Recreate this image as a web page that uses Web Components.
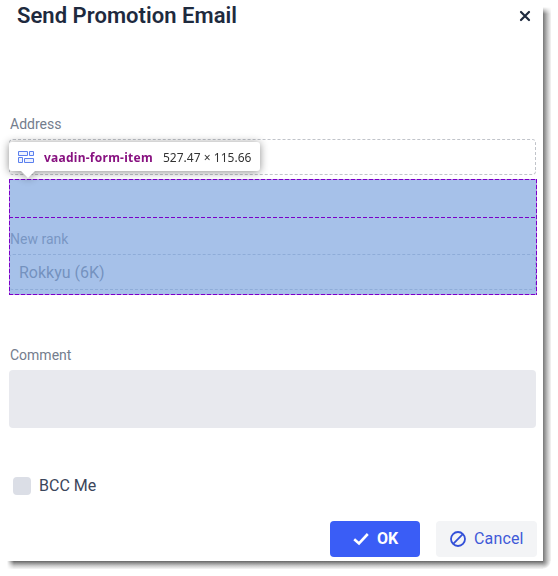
<!DOCTYPE html>
<html lang="en"><head><meta charset="utf-8"><title>Send Promotion Email</title>
<style>html,body{margin:0;background:#fff;width:558px;height:576px;overflow:hidden}</style></head>
<body>
<promo-dialog heading="Send Promotion Email">
  <form-row label="Address" style="height:63px"><dash-field></dash-field></form-row>
  <form-row label="New rank" style="height:116px"><dash-field filled>Rokkyu (6K)</dash-field>
    <inspect-overlay slot="over" tag="vaadin-form-item" dims="527.47 × 115.66"></inspect-overlay></form-row>
  <form-row label="Comment" style="height:133px"><dash-field area></dash-field></form-row>
  <check-box>BCC Me</check-box>
  <action-button slot="footer" primary>
    <svg slot="icon" width="18" height="16" viewBox="0 0 18 16"><path d="M2.2 8.2 7 12.4 15.8 3" fill="none" stroke="#fff" stroke-width="2.6"/></svg>OK</action-button>
  <action-button slot="footer">
    <svg slot="icon" width="16" height="16" viewBox="0 0 16 16"><g fill="none" stroke="#3350d8" stroke-width="1.8"><circle cx="8" cy="8" r="7"/><path d="M3.2 12.8 12.8 3.2"/></g></svg>Cancel</action-button>
</promo-dialog>
<script>
const define = (name, html) => {
  const t = document.createElement('template');
  t.innerHTML = html;
  customElements.define(name, class extends HTMLElement {
    constructor() {
      super();
      this.attachShadow({mode: 'open'}).append(t.content.cloneNode(true));
    }
    connectedCallback() {
      this.shadowRoot.querySelectorAll('[data-attr]').forEach(e => {
        e.textContent = this.getAttribute(e.dataset.attr) || '';
      });
    }
  });
};
define('form-row', `<style>
:host{display:flex;flex-direction:column;position:relative;box-sizing:border-box}
.label{height:18px;line-height:18px;font-size:14px;color:#747d8d;padding-left:1px;margin-bottom:6px}
.body{display:flex;flex-direction:column}
:host([label="New rank"]){padding-top:51px}
:host([label="New rank"]) .label{color:#4a5468}
:host([label="Comment"]){padding-top:51px}
</style><div class="label" data-attr="label"></div><div class="body"><slot></slot></div><slot name="over"></slot>`);
define('dash-field', `<style>
:host{display:block;box-sizing:border-box;width:527px;height:36px;border:1px dashed #c1c4ca;border-radius:4px;padding-left:9px;font-size:16px;line-height:36px;color:#384356}
:host([filled]){border-color:#a0aabb}
:host([area]){height:58px;border:0;background:#e8e9ee}
</style><slot></slot>`);
define('check-box', `<style>
:host{display:flex;align-items:center;height:18px;margin:49px 0 0 4px;gap:8px;font-size:16px;line-height:18px;color:#3b465b}
i{width:18px;height:18px;border-radius:4px;background:#dbdee6}
</style><i></i><span><slot></slot></span>`);
define('action-button', `<style>
:host{display:flex;box-sizing:border-box;width:101px;height:36px;border-radius:4px;align-items:center;justify-content:flex-start;padding-left:14px;gap:8px;background:#f3f4f6;color:#3f59d8;font-size:16px;font-weight:400;letter-spacing:.15px}
:host([primary]){width:90px;background:#3a5df6;color:#fff;font-weight:700;padding-left:22px;gap:7px;letter-spacing:0}
::slotted(svg){display:block}
span{padding-bottom:2px}
</style><slot name="icon"></slot><span><slot></slot></span>`);
define('inspect-overlay', `<style>
:host{display:block;position:absolute;left:0;top:0;width:528px;height:116px;box-sizing:border-box}
.fill{position:absolute;inset:0;background:rgba(136,172,226,.75)}
svg.lines{position:absolute;inset:0}
.tip{position:absolute;left:0;top:-37px;width:251px;height:29px;box-sizing:border-box;background:#fff;border-radius:3px;display:flex;align-items:center;padding:1px 0 0 9px;filter:drop-shadow(0 1px 4px rgba(0,0,0,.45));font:12px "Noto Sans","Open Sans",sans-serif;color:#333}
.tip::after{content:"";position:absolute;left:11px;top:28px;border:8px solid transparent;border-top-color:#fff;border-bottom:0}
b{color:#881280;margin:0 10px 0 10px;white-space:nowrap;font-size:12px;letter-spacing:.26px}
.dim{white-space:nowrap;letter-spacing:.02px}
</style>
<div class="fill"></div>
<svg class="lines" width="528" height="116"><rect x=".5" y=".5" width="527" height="115" fill="none" stroke="#b98fe8"/><g fill="none" stroke="#7a00c8" stroke-dasharray="4 2"><path d="M0 .5H528M0 38.5H528M0 115.5H528M.5 0V116M527.5 0V116"/></g></svg>
<div class="tip"><svg width="16" height="12" viewBox="0 0 16 12"><g fill="#edf2ff" stroke="#5b80ee"><path d="M.5 .5h9v4h-9zM11.5 .5h4v4h-4zM.5 6.5h4v5h-4zM6.5 7.5h9v4h-9z"/></g></svg><b data-attr="tag"></b><span class="dim" data-attr="dims"></span></div>`);
define('promo-dialog', `<style>
:host{display:grid;grid-template:561px 8px/543px 8px;font-family:Roboto,sans-serif;width:551px;height:569px;overflow:hidden}
.panel{display:flex;flex-direction:column;background:#fff}
header{display:flex;justify-content:space-between;align-items:center;height:31px;padding:0 12px 0 17px;color:#1e2a3e}
h1{font-size:22px;line-height:30px;font-weight:600;margin:0;letter-spacing:.04px}
main{display:flex;flex-direction:column;box-sizing:content-box;padding:84px 0 0 9px;width:528px;height:380px}
::slotted(form-row[label="New rank"]){margin-top:1px}
footer{display:flex;gap:16px;padding-left:330px;margin-top:26px}
.r{background:linear-gradient(90deg,#777,#999 25%,#c8c8c8 60%,#f5f5f5);margin-top:7px;-webkit-mask:linear-gradient(transparent,#000 7px)}
.b{background:linear-gradient(#666,#999 30%,#ccc 60%,#f7f7f7);margin-left:7px;-webkit-mask:linear-gradient(90deg,transparent,#000 7px)}
.c{background:radial-gradient(circle at 0 0,#777,#999 2px,#ccc 5px,#fff 8px)}
</style>
<div class="panel"><header><h1 data-attr="heading"></h1><svg width="12" height="12" viewBox="0 0 12 12"><path d="M2 2 10 10M10 2 2 10" stroke="#1e2a3e" stroke-width="2.2" stroke-linecap="round"/></svg></header>
<main><slot></slot></main><footer><slot name="footer"></slot></footer></div><div class="r"></div><div class="b"></div><div class="c"></div>`);
</script>
</body></html>
